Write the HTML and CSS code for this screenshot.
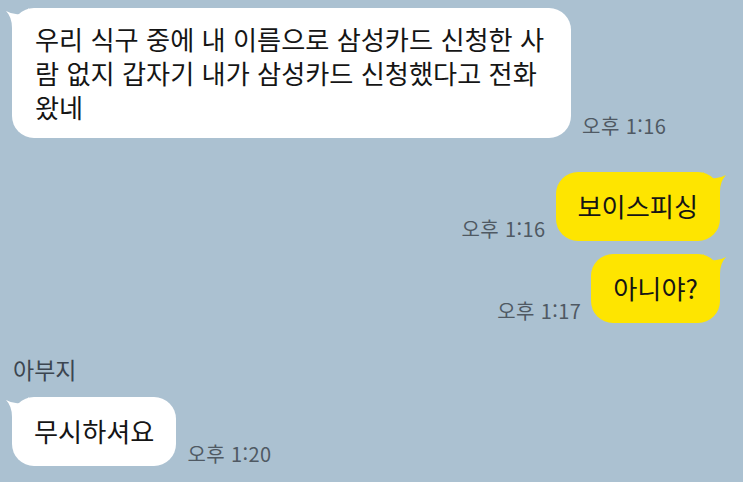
FILE: index.html
```html
<!DOCTYPE html>
<html lang="ko">
<head>
    <meta charset="UTF-8">
    <meta name="viewport" content="width=device-width, initial-scale=1.0">
    <title>채팅</title>
    <link rel="stylesheet" href="styles.css">
</head>
<body>
    <div class="chat">
        <div class="row in first">
            <div class="bubble white">
                <svg class="tail" width="24" height="26" viewBox="0 0 24 26"><path d="M1 3 Q8 7 15 6 Q20 5 24 0 L24 26 L7 26 L7 20 Q7 9 1 3 Z"/></svg>
                <span class="line">우리 식구 중에 내 이름으로 삼성카드 신청한 사</span>
                <span class="line">람 없지 갑자기 내가 삼성카드 신청했다고 전화</span>
                <span class="line">왔네</span>
            </div>
            <span class="time">오후 1:16</span>
        </div>

        <div class="row out">
            <span class="time">오후 1:16</span>
            <div class="bubble yellow">
                <svg class="tail" width="24" height="26" viewBox="0 0 24 26"><path d="M1 3 Q8 7 15 6 Q20 5 24 0 L24 26 L7 26 L7 20 Q7 9 1 3 Z"/></svg>
                보이스피싱
            </div>
        </div>

        <div class="row out tight">
            <span class="time">오후 1:17</span>
            <div class="bubble yellow">
                <svg class="tail" width="24" height="26" viewBox="0 0 24 26"><path d="M1 3 Q8 7 15 6 Q20 5 24 0 L24 26 L7 26 L7 20 Q7 9 1 3 Z"/></svg>
                아니야?
            </div>
        </div>

        <div class="sender">아부지</div>
        <div class="row in">
            <div class="bubble white">
                <svg class="tail" width="24" height="26" viewBox="0 0 24 26"><path d="M1 3 Q8 7 15 6 Q20 5 24 0 L24 26 L7 26 L7 20 Q7 9 1 3 Z"/></svg>
                무시하셔요
            </div>
            <span class="time">오후 1:20</span>
        </div>
    </div>
</body>
</html>
```

FILE: styles.css
```css
html, body {
    margin: 0;
    padding: 0;
}
body {
    background: #abc1d1;
    font-family: "Noto Sans CJK KR", "Noto Sans", sans-serif;
    color: #151515;
    width: 743px;
    height: 482px;
    overflow: hidden;
}
.chat {
    padding: 8px 23px 0 12px;
}
.row {
    display: flex;
    align-items: flex-end;
    gap: 10px;
    margin-top: 34px;
}
.row.first {
    margin-top: 0;
}
.row.tight {
    margin-top: 13px;
}
.row.out {
    justify-content: flex-end;
}
.bubble {
    position: relative;
    font-size: 26.2px;
    line-height: 34px;
    padding: 17px 22px 18px 22px;
    border-radius: 22px;
    white-space: nowrap;
}
.bubble.white {
    background: #fff;
}
.bubble.yellow {
    background: #fee500;
}
.row.first .bubble.white {
    padding: 14px 27px 14px 23px;
}
.line {
    display: block;
    height: 34px;
}
.tail {
    position: absolute;
    top: 0;
    left: -7px;
}
.white .tail path {
    fill: #fff;
}
.yellow .tail {
    left: auto;
    right: -7px;
    transform: scaleX(-1);
}
.yellow .tail path {
    fill: #fee500;
}
.time {
    font-size: 20px;
    letter-spacing: 0.4px;
    color: #4f5963;
    line-height: 22px;
    margin-bottom: 1px;
    white-space: nowrap;
}
.row.in .time {
    margin-left: 1px;
}
.sender {
    font-size: 23px;
    color: #3c4650;
    margin: 31px 0 0 1px;
    line-height: 30px;
}
.sender + .row {
    margin-top: 13px;
}
```
